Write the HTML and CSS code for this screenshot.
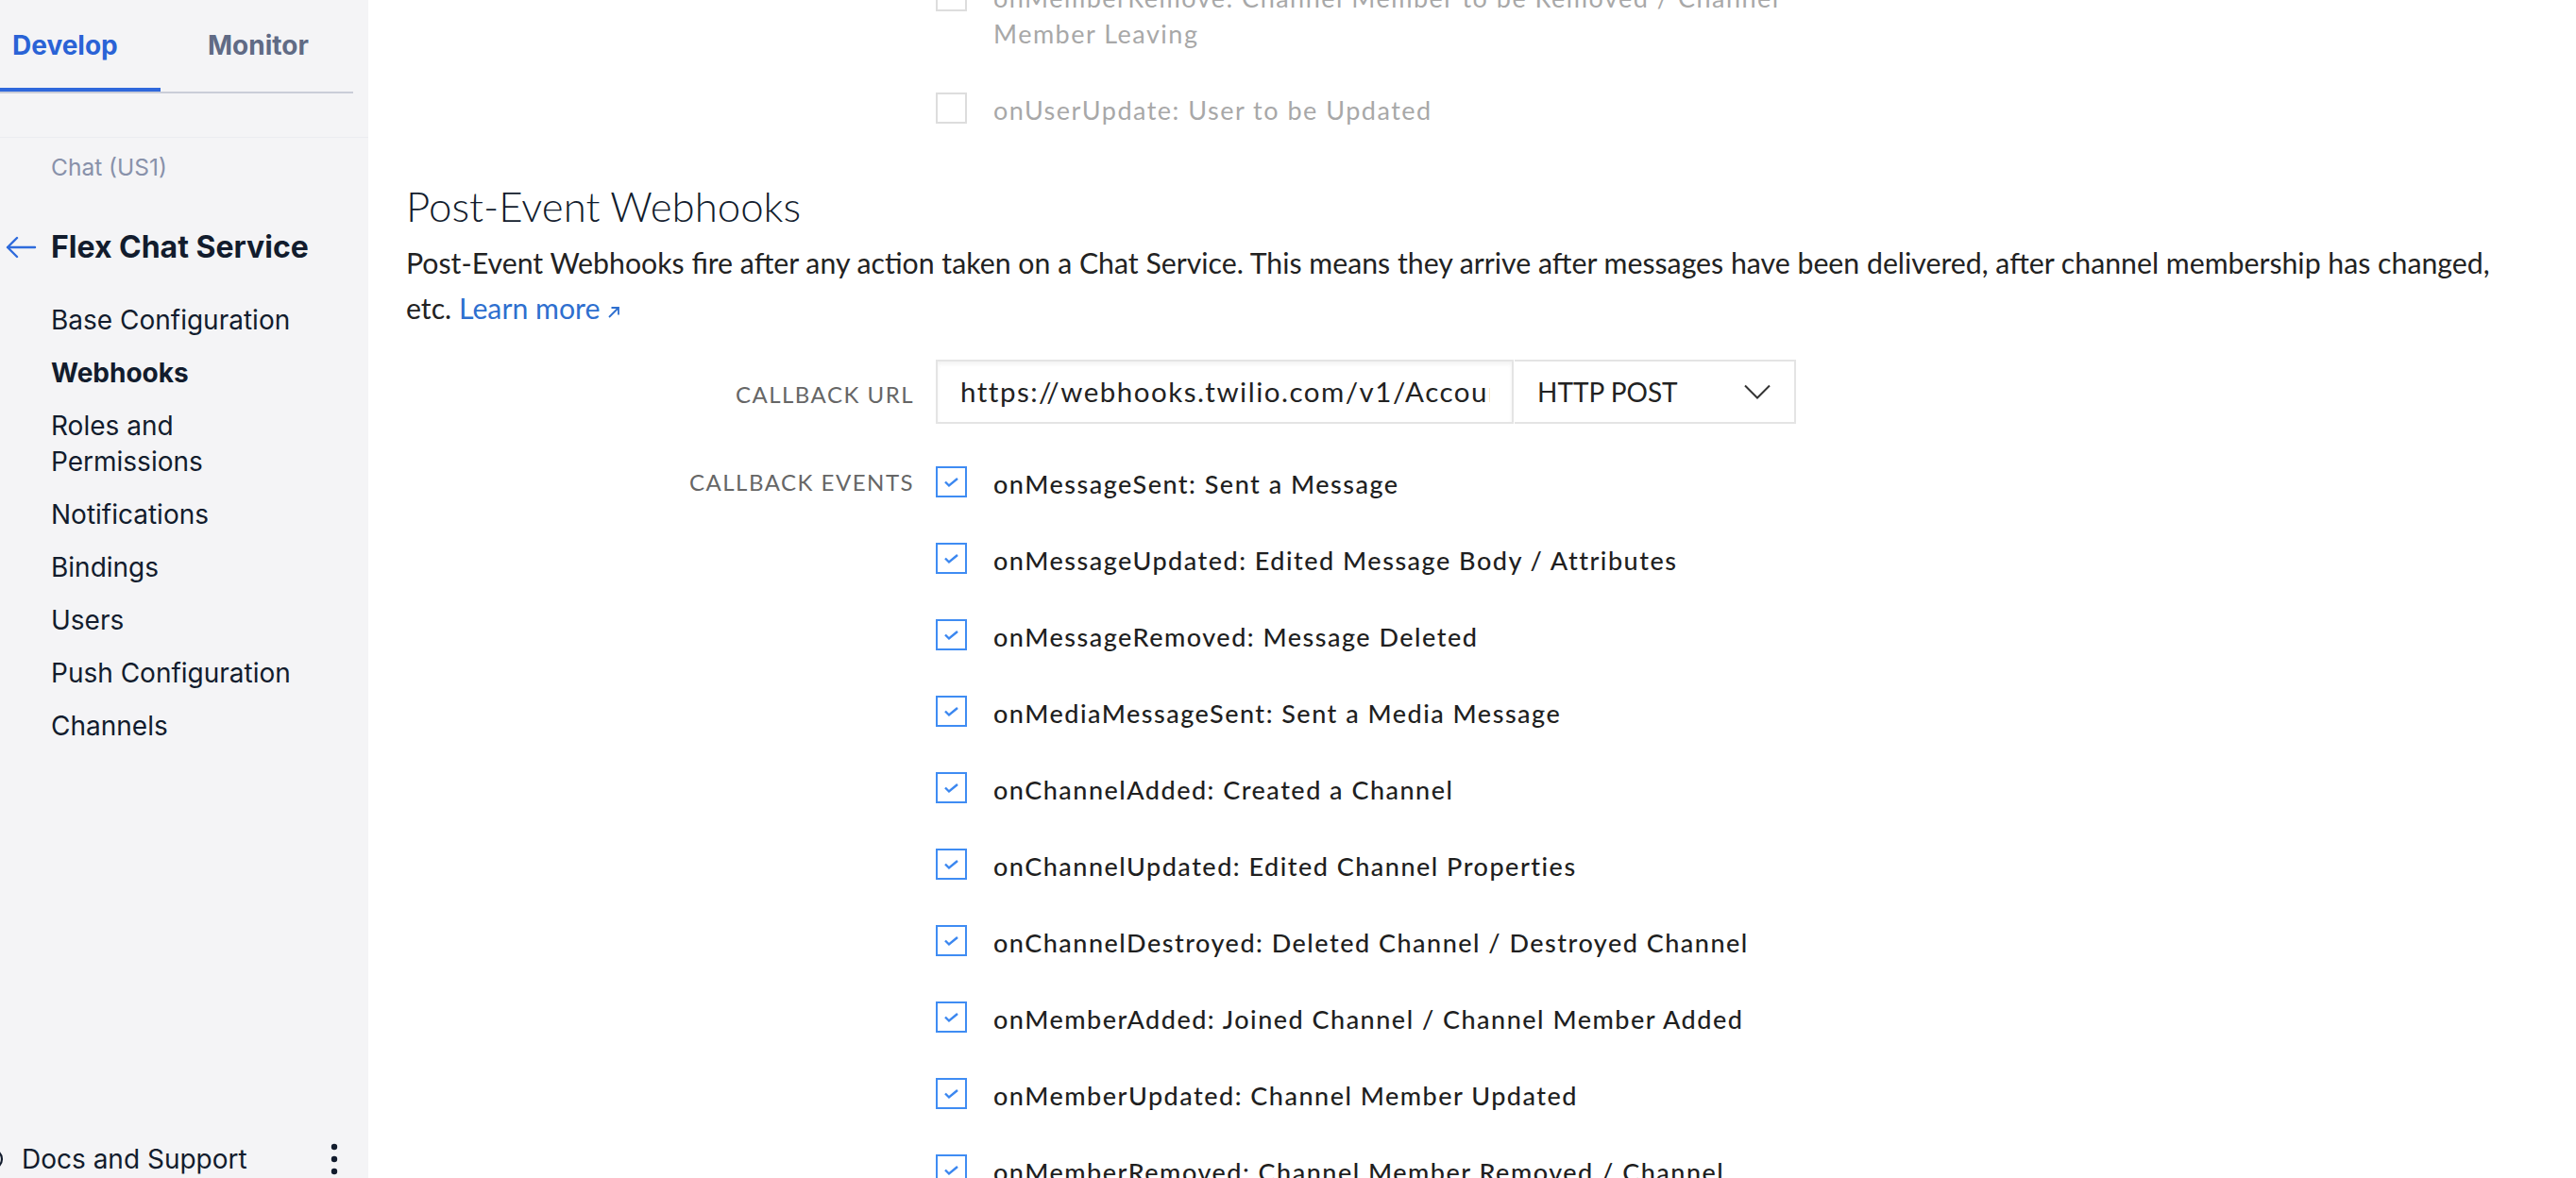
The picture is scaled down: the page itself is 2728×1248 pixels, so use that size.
FILE: index.html
```html
<!DOCTYPE html>
<html lang="en">
<head>
<meta charset="utf-8">
<title>Flex Chat Service - Webhooks</title>
<link rel="stylesheet" href="styles.css">
</head>
<body>
<div class="app">
  <aside class="sidebar">
    <div class="tabs">
      <div class="tab tab-active">Develop</div>
      <div class="tab tab-monitor">Monitor</div>
    </div>
    <div class="divider"></div>
    <div class="crumb">Chat (US1)</div>
    <div class="service">
      <svg class="back" width="34" height="24" viewBox="0 0 34 24"><path d="M32 12H3M13 2L3 12l10 10" fill="none" stroke="#2f6bdc" stroke-width="2.4" stroke-linecap="round" stroke-linejoin="round"/></svg>
      <span>Flex Chat Service</span>
    </div>
    <nav class="nav">
      <div class="nav-item">Base Configuration</div>
      <div class="nav-item nav-current">Webhooks</div>
      <div class="nav-item">Roles and Permissions</div>
      <div class="nav-item">Notifications</div>
      <div class="nav-item">Bindings</div>
      <div class="nav-item">Users</div>
      <div class="nav-item">Push Configuration</div>
      <div class="nav-item">Channels</div>
    </nav>
    <div class="footer">
      <svg class="docs-icon" width="24" height="24" viewBox="0 0 24 24"><circle cx="12" cy="12" r="10" fill="none" stroke="#121c2d" stroke-width="2.2"/></svg>
      <span class="footer-text">Docs and Support</span>
      <svg class="kebab" width="8" height="34" viewBox="0 0 8 34"><circle cx="4" cy="4" r="3.2" fill="#121c2d"/><circle cx="4" cy="17" r="3.2" fill="#121c2d"/><circle cx="4" cy="30" r="3.2" fill="#121c2d"/></svg>
    </div>
  </aside>

  <main class="main">
    <div class="grid pre">
      <div class="grid-label"></div>
      <div class="events">
        <div class="event disabled">
          <span class="box"></span>
          <span class="event-text">onMemberRemove: Channel Member to be Removed / Channel Member Leaving</span>
        </div>
        <div class="event disabled">
          <span class="box"></span>
          <span class="event-text">onUserUpdate: User to be Updated</span>
        </div>
      </div>
    </div>

    <h2 class="title">Post-Event Webhooks</h2>
    <p class="desc">Post-Event Webhooks fire after any action taken on a Chat Service. This means they arrive after messages have been delivered, after channel membership has changed, etc. <a class="learn">Learn more<svg class="ext" width="14" height="14" viewBox="0 0 14 14"><path d="M2 12L12 2M4.5 2H12v7.5" fill="none" stroke="#2e6fcf" stroke-width="1.8"/></svg></a></p>

    <div class="grid form">
      <div class="grid-label field-label url-label">Callback URL</div>
      <div class="url-group">
        <div class="input"><span class="input-value">https://webhooks.twilio.com/v1/Accoun</span></div>
        <div class="select">
          <span>HTTP POST</span>
          <svg width="28" height="16" viewBox="0 0 28 16"><path d="M1 1.5l13 13 13-13" fill="none" stroke="#333" stroke-width="2"/></svg>
        </div>
      </div>

      <div class="grid-label field-label events-label">Callback Events</div>
      <div class="events">
        <div class="event"><span class="box checked"><svg width="33" height="33" viewBox="0 0 33 33"><path d="M10 16.5l4 4 9-7.5" fill="none" stroke="#3b87f0" stroke-width="2.4"/></svg></span><span class="event-text">onMessageSent: Sent a Message</span></div>
        <div class="event"><span class="box checked"><svg width="33" height="33" viewBox="0 0 33 33"><path d="M10 16.5l4 4 9-7.5" fill="none" stroke="#3b87f0" stroke-width="2.4"/></svg></span><span class="event-text">onMessageUpdated: Edited Message Body / Attributes</span></div>
        <div class="event"><span class="box checked"><svg width="33" height="33" viewBox="0 0 33 33"><path d="M10 16.5l4 4 9-7.5" fill="none" stroke="#3b87f0" stroke-width="2.4"/></svg></span><span class="event-text">onMessageRemoved: Message Deleted</span></div>
        <div class="event"><span class="box checked"><svg width="33" height="33" viewBox="0 0 33 33"><path d="M10 16.5l4 4 9-7.5" fill="none" stroke="#3b87f0" stroke-width="2.4"/></svg></span><span class="event-text">onMediaMessageSent: Sent a Media Message</span></div>
        <div class="event"><span class="box checked"><svg width="33" height="33" viewBox="0 0 33 33"><path d="M10 16.5l4 4 9-7.5" fill="none" stroke="#3b87f0" stroke-width="2.4"/></svg></span><span class="event-text">onChannelAdded: Created a Channel</span></div>
        <div class="event"><span class="box checked"><svg width="33" height="33" viewBox="0 0 33 33"><path d="M10 16.5l4 4 9-7.5" fill="none" stroke="#3b87f0" stroke-width="2.4"/></svg></span><span class="event-text">onChannelUpdated: Edited Channel Properties</span></div>
        <div class="event"><span class="box checked"><svg width="33" height="33" viewBox="0 0 33 33"><path d="M10 16.5l4 4 9-7.5" fill="none" stroke="#3b87f0" stroke-width="2.4"/></svg></span><span class="event-text">onChannelDestroyed: Deleted Channel / Destroyed Channel</span></div>
        <div class="event"><span class="box checked"><svg width="33" height="33" viewBox="0 0 33 33"><path d="M10 16.5l4 4 9-7.5" fill="none" stroke="#3b87f0" stroke-width="2.4"/></svg></span><span class="event-text">onMemberAdded: Joined Channel / Channel Member Added</span></div>
        <div class="event"><span class="box checked"><svg width="33" height="33" viewBox="0 0 33 33"><path d="M10 16.5l4 4 9-7.5" fill="none" stroke="#3b87f0" stroke-width="2.4"/></svg></span><span class="event-text">onMemberUpdated: Channel Member Updated</span></div>
        <div class="event"><span class="box checked"><svg width="33" height="33" viewBox="0 0 33 33"><path d="M10 16.5l4 4 9-7.5" fill="none" stroke="#3b87f0" stroke-width="2.4"/></svg></span><span class="event-text">onMemberRemoved: Channel Member Removed / Channel Member Left</span></div>
      </div>
    </div>
  </main>
</div>
</body>
</html>
```

FILE: styles.css
```css
* { box-sizing: border-box; }

html, body {
  margin: 0;
  padding: 0;
  height: 100%;
  overflow: hidden;
  background: #ffffff;
}

.app {
  display: flex;
  height: 1248px;
  overflow: hidden;
}

/* ---------- Sidebar ---------- */
.sidebar {
  width: 390px;
  flex: 0 0 390px;
  background: #f4f4f6;
  display: flex;
  flex-direction: column;
  font-family: "Inter", "Liberation Sans", sans-serif;
  color: #121c2d;
  padding-right: 16px;
}

.tabs {
  display: flex;
  height: 99px;
  border-bottom: 2px solid #cacdd8;
}

.tab {
  height: 97px;
  padding-top: 31px;
  font-size: 28px;
  line-height: 34px;
  font-weight: 700;
  color: #606b85;
}

.tab-active {
  width: 170px;
  padding-left: 13px;
  color: #2a63d6;
  border-bottom: 4px solid #2f68dc;
}

.tab-monitor {
  width: 204px;
  padding-left: 50px;
}

.divider {
  height: 1px;
  margin-top: 46px;
  background: #ebecf0;
  margin-right: -16px;
}

.crumb {
  margin-top: 17px;
  padding-left: 54px;
  font-size: 24.5px;
  line-height: 29px;
  color: #8891aa;
}

.service {
  display: flex;
  align-items: center;
  margin-top: 51px;
  height: 38px;
}

.back {
  margin-left: 5px;
  margin-right: 15px;
  flex: 0 0 auto;
}

.service span {
  font-size: 32px;
  font-weight: 700;
  line-height: 38px;
}

.nav {
  margin-top: 30px;
  padding-left: 54px;
  width: 330px;
}

.nav-item {
  padding: 9px 0;
  font-size: 28px;
  line-height: 38px;
  color: #121c2d;
}

.nav-current {
  font-weight: 700;
}

.footer {
  margin-top: auto;
  display: flex;
  align-items: center;
  height: 38px;
  margin-bottom: 1px;
}

.docs-icon {
  margin-left: -20px;
  flex: 0 0 auto;
}

.footer-text {
  margin-left: 19px;
  font-size: 28px;
  line-height: 38px;
}

.kebab {
  margin-left: auto;
  margin-right: 16px;
}

/* ---------- Main ---------- */
.main {
  flex: 1 1 auto;
  padding: 0 68px 0 40px;
  font-family: "Lato", "Liberation Sans", sans-serif;
  color: #222222;
  overflow: hidden;
}

.grid {
  display: grid;
  grid-template-columns: 538px 911px;
  column-gap: 23px;
}

.pre {
  margin-top: -21px;
}

.events {
  display: flex;
  flex-direction: column;
  gap: 43px;
}

.event {
  display: flex;
  align-items: flex-start;
  gap: 28px;
}

.box {
  flex: 0 0 33px;
  width: 33px;
  height: 33px;
  border: 2px solid #dddddd;
  background: #ffffff;
  display: flex;
}

.box svg {
  margin: -2px;
}

.box.checked {
  border-color: #3f8cf3;
}

.event-text {
  font-size: 27px;
  font-weight: 500;
  letter-spacing: 1.5px;
  line-height: 38px;
  color: #1f1f1f;
  max-width: 850px;
}

.disabled .event-text {
  color: #a8a8a8;
  font-weight: 400;
}

.title {
  margin: 57px 0 0 0;
  font-size: 43.8px;
  line-height: 50px;
  font-weight: 300;
  color: #121c2d;
}

.desc {
  margin: 11px 0 0 0;
  font-size: 30.25px;
  line-height: 48px;
  font-weight: 400;
  color: #222222;
}

.learn {
  color: #2e6fcf;
  text-decoration: none;
}

.ext {
  margin-left: 8px;
  vertical-align: 0;
}

.form {
  margin-top: 31px;
  row-gap: 42px;
}

.field-label {
  text-align: right;
  text-transform: uppercase;
  font-size: 24px;
  letter-spacing: 1.5px;
  color: #666666;
}

.url-label {
  line-height: 68px;
  padding-top: 3px;
}

.events-label {
  line-height: 33px;
}

.url-group {
  display: flex;
  height: 68px;
}

.input {
  width: 612px;
  border: 2px solid #e4e4e4;
  box-shadow: inset 0 3px 4px rgba(0, 0, 0, 0.05);
  padding: 0 23px 0 24px;
  font-size: 29.5px;
  letter-spacing: 1.5px;
  line-height: 64px;
  color: #222222;
}

.input-value {
  display: block;
  white-space: nowrap;
  overflow: hidden;
}

.select {
  width: 299px;
  border: 2px solid #e4e4e4;
  border-left: 0;
  margin-left: 1px;
  display: flex;
  align-items: center;
  justify-content: space-between;
  padding: 0 25px 0 24px;
  font-size: 28px;
  color: #222222;
}
```
